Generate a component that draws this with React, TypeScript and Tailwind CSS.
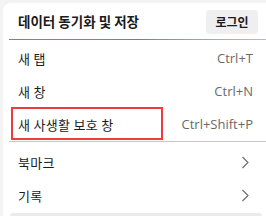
const font = { fontFamily: '"Noto Sans CJK KR", "Noto Sans", sans-serif' }

const MenuRow = ({ label, shortcut, chevron }: { label: string; shortcut?: string; chevron?: boolean }) => (
  <div className="flex h-[33px] items-center justify-between pl-[9px] pr-[13px]">
    <span className="text-[13px] tracking-[0.3px] text-[#1c1c1c]">{label}</span>
    {shortcut && <span className="text-[13px] text-[#6a6a6a]" style={{ fontFamily: '"Open Sans", sans-serif' }}>{shortcut}</span>}
    {chevron && (
      <svg width="9" height="13" viewBox="0 0 9 13" className="mr-[3px]">
        <path d="M1.5 1 L7 6.5 L1.5 12" fill="none" stroke="#6a6a6a" strokeWidth="1.1" />
      </svg>
    )}
  </div>
)

export default function App() {
  return (
    <div className="h-[216px] w-[266px] overflow-hidden bg-[#f3f3f3] pl-[3px] pt-[3px]" style={font}>
      <div className="relative h-[213px] rounded-tl-[8px] bg-white pl-[6px]">
        <div className="flex h-[36px] items-center justify-between pl-[9px] pr-[8px] pt-[1px]">
          <span className="text-[13.5px] font-bold text-[#1b1b1b]">데이터 동기화 및 저장</span>
          <button className="h-[24px] w-[52px] rounded-[4px] bg-[#efeff1] text-[12px] font-bold text-[#1b1b1b]">로그인</button>
        </div>
        <div className="h-[1px] bg-gradient-to-r from-[#9f5cf5] via-[#ec3f9a] to-[#f8b33e]" />
        <div className="pt-[2px]">
          <MenuRow label="새 탭" shortcut="Ctrl+T" />
          <MenuRow label="새 창" shortcut="Ctrl+N" />
          <div className="relative">
            <MenuRow label="새 사생활 보호 창" shortcut="Ctrl+Shift+P" />
            <div className="absolute left-[2px] top-[-1px] h-[33px] w-[152px] border-2 border-[#ee3b3b]" />
          </div>
        </div>
        <div className="h-[1px] bg-[#c6c6c6]" />
        <div className="pt-[4px]">
          <MenuRow label="북마크" chevron />
          <MenuRow label="기록" chevron />
        </div>
        <div className="absolute bottom-0 left-[7px] h-[3px] w-[252px] rounded-t-[3px] bg-[#ebebeb]" />
      </div>
    </div>
  )
}
